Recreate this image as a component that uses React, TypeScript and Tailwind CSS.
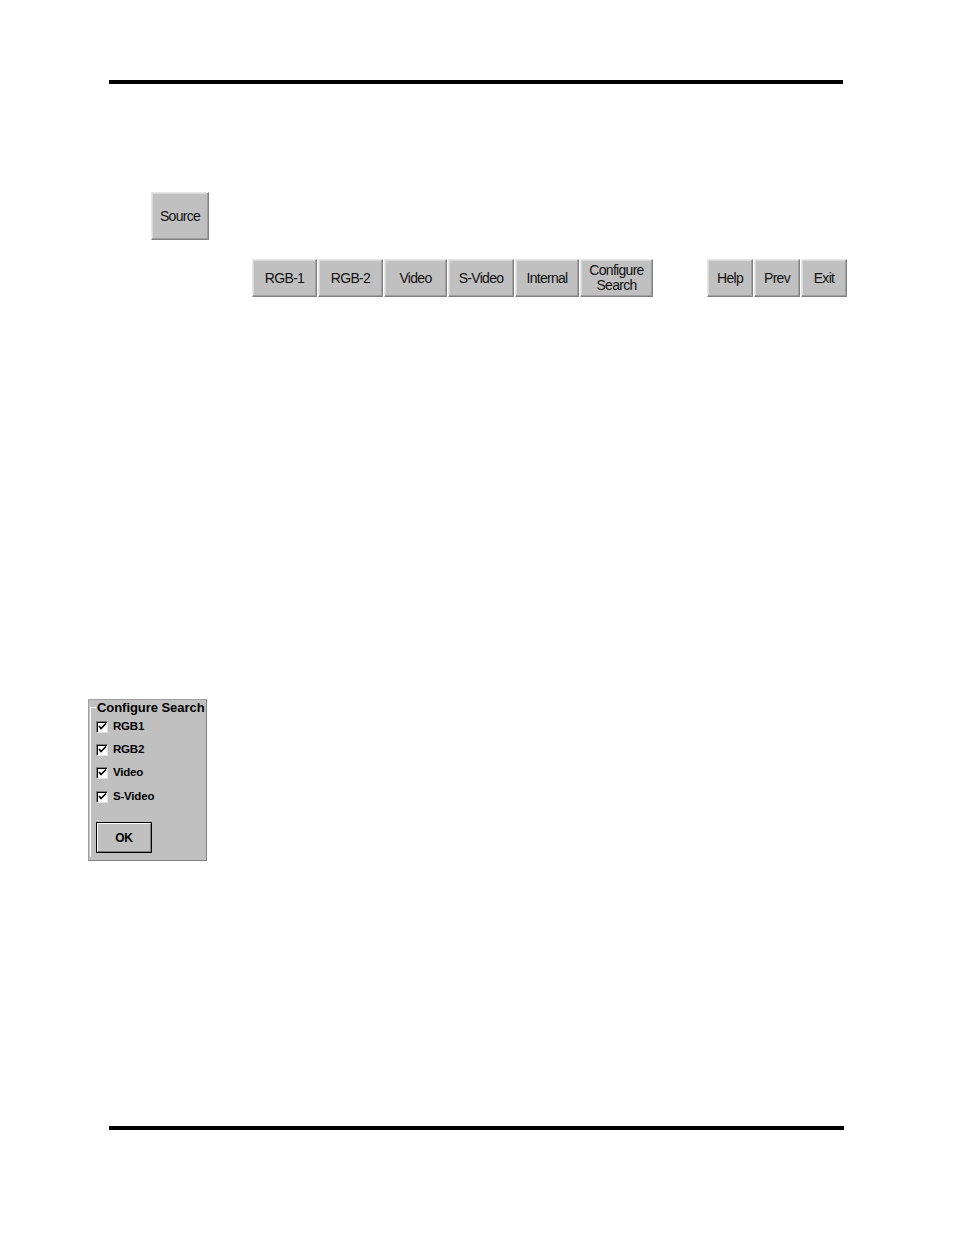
import React from "react";

const font = { fontFamily: '"Liberation Sans", Arial, sans-serif' };

// bouton gris façon Windows 95
const RaisedButton = ({ label, className = "" }: { label: React.ReactNode; className?: string }) => (
  <div
    className={`flex items-center justify-center bg-[#c0c0c0] border border-t-[#e8e8e8] border-l-[#e8e8e8] border-r-[#808080] border-b-[#808080] shadow-[inset_-1px_-1px_0_#a0a0a0,inset_1px_1px_0_#d8d8d8] text-[14px] leading-[15px] text-[#111] text-center tracking-[-0.7px] ${className}`}
  >
    {label}
  </div>
);

const sources = [
  { label: "RGB-1", w: "w-[65px]" },
  { label: "RGB-2", w: "w-[65px]" },
  { label: "Video", w: "w-[63px]" },
  { label: "S-Video", w: "w-[66px]" },
  { label: "Internal", w: "w-[64px]" },
  { label: <>Configure<br />Search</>, w: "w-[73px]" },
];

const nav = [
  { label: "Help", w: "w-[46px]" },
  { label: "Prev", w: "w-[46px]" },
  { label: "Exit", w: "w-[46px]" },
];

const Check = ({ label }: { label: string }) => (
  <div className="flex items-center gap-[5px] h-[13px]">
    <div className="w-[12px] h-[12px] bg-white border border-t-[#808080] border-l-[#808080] border-r-[#e0e0e0] border-b-[#e0e0e0] shadow-[inset_1px_1px_0_#000] flex items-center justify-center">
      <svg width="9" height="9" viewBox="0 0 9 9">
        <path d="M1 4 L3 6.5 L8 1.5" stroke="#000" strokeWidth="1.6" fill="none" />
      </svg>
    </div>
    <span className="text-[11.5px] font-bold text-black leading-none tracking-[-0.2px]">{label}</span>
  </div>
);

export default function App() {
  return (
    <div className="w-[954px] h-[1235px] bg-white flex flex-col" style={font}>
      <div className="mt-[80px] ml-[109px] w-[734px] h-[4px] bg-black" />

      {/* bouton Source */}
      <RaisedButton label="Source" className="mt-[108px] ml-[151px] w-[58px] h-[48px]" />

      {/* rangée des sources + navigation */}
      <div className="mt-[19px] flex">
        <div className="ml-[252px] flex gap-[1px]">
          {sources.map((s, i) => (
            <RaisedButton key={i} label={s.label} className={`${s.w} h-[38px]`} />
          ))}
        </div>
        <div className="ml-[54px] flex gap-[1px]">
          {nav.map((n) => (
            <RaisedButton key={n.label} label={n.label} className={`${n.w} h-[38px]`} />
          ))}
        </div>
      </div>

      {/* panneau Configure Search */}
      <div className="mt-[402px] ml-[88px] w-[119px] h-[162px] bg-[#c0c0c0] border border-[#a0a0a0] border-r-[#808080] border-b-[#808080] relative">
        <div className="absolute left-[1px] top-[7px] w-[6px] h-[1px] bg-white" />
        <div className="absolute left-[1px] top-[7px] w-[1px] h-[150px] bg-white" />
        <div className="pl-[8px] text-[13px] font-bold text-black leading-[15px] whitespace-nowrap tracking-[-0.05px]">
          Configure Search
        </div>
        <div className="pl-[7px] pt-[5px] flex flex-col gap-[10px]">
          <Check label="RGB1" />
          <Check label="RGB2" />
          <Check label="Video" />
          <div className="mt-[1px]">
            <Check label="S-Video" />
          </div>
        </div>
        <div className="ml-[7px] mt-[19px] w-[56px] h-[31px] border border-black bg-[#c0c0c0] flex">
          <div className="flex-1 flex items-center justify-center border border-t-white border-l-white border-r-[#808080] border-b-[#808080] text-[12px] font-bold text-black tracking-[-0.3px]">
            OK
          </div>
        </div>
      </div>

      <div className="mt-[265px] ml-[109px] w-[735px] h-[4px] bg-black" />
    </div>
  );
}
